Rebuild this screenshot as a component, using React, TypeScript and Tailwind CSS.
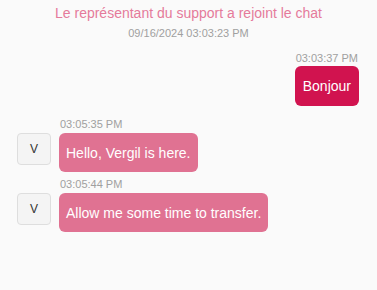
import React from 'react';

type AgentMsg = { time: string; text: string };

const agentMessages: AgentMsg[] = [
  { time: '03:05:35 PM', text: 'Hello, Vergil is here.' },
  { time: '03:05:44 PM', text: 'Allow me some time to transfer.' },
];

function AgentRow({ time, text }: AgentMsg) {
  return (
    <div className="flex flex-col pl-[59px]">
      <div className="text-[11px] leading-[13px] text-[#a0a0a0] pl-[1px]">{time}</div>
      <div className="relative mt-[2px] flex">
        <div className="absolute -left-[42px] top-0 w-[34px] h-[32px] rounded-[4px] border border-[#dedede] bg-[#f4f4f4] flex items-center justify-center text-[12px] text-[#333]">
          V
        </div>
        <div className="rounded-[6px] bg-[#e07292] text-white text-[14px] leading-[16px] px-[7px] py-[11.5px]">
          {text}
        </div>
      </div>
    </div>
  );
}

export default function App() {
  return (
    <div className="min-h-screen bg-[#fafafa] font-['Liberation_Sans',Arial,sans-serif]">
      <div className="pt-[3px] text-center text-[14px] leading-[20px] text-[#e57a9b]">
        Le représentant du support a rejoint le chat
      </div>
      <div className="mt-[3px] text-center text-[11px] leading-[14px] text-[#a0a0a0]">
        09/16/2024 03:03:23 PM
      </div>

      <div className="mt-[12px] flex flex-col items-end pr-[18px]">
        <div className="text-[11px] leading-[13px] text-[#a0a0a0] pr-[1px]">03:03:37 PM</div>
        <div className="mt-[1px] rounded-[6px] bg-[#d1134f] text-white text-[14px] leading-[16px] px-[8px] py-[12px]">
          Bonjour
        </div>
      </div>

      <div className="mt-[12px] flex flex-col gap-[6px]">
        {agentMessages.map((m) => (
          <AgentRow key={m.time} {...m} />
        ))}
      </div>
    </div>
  );
}
